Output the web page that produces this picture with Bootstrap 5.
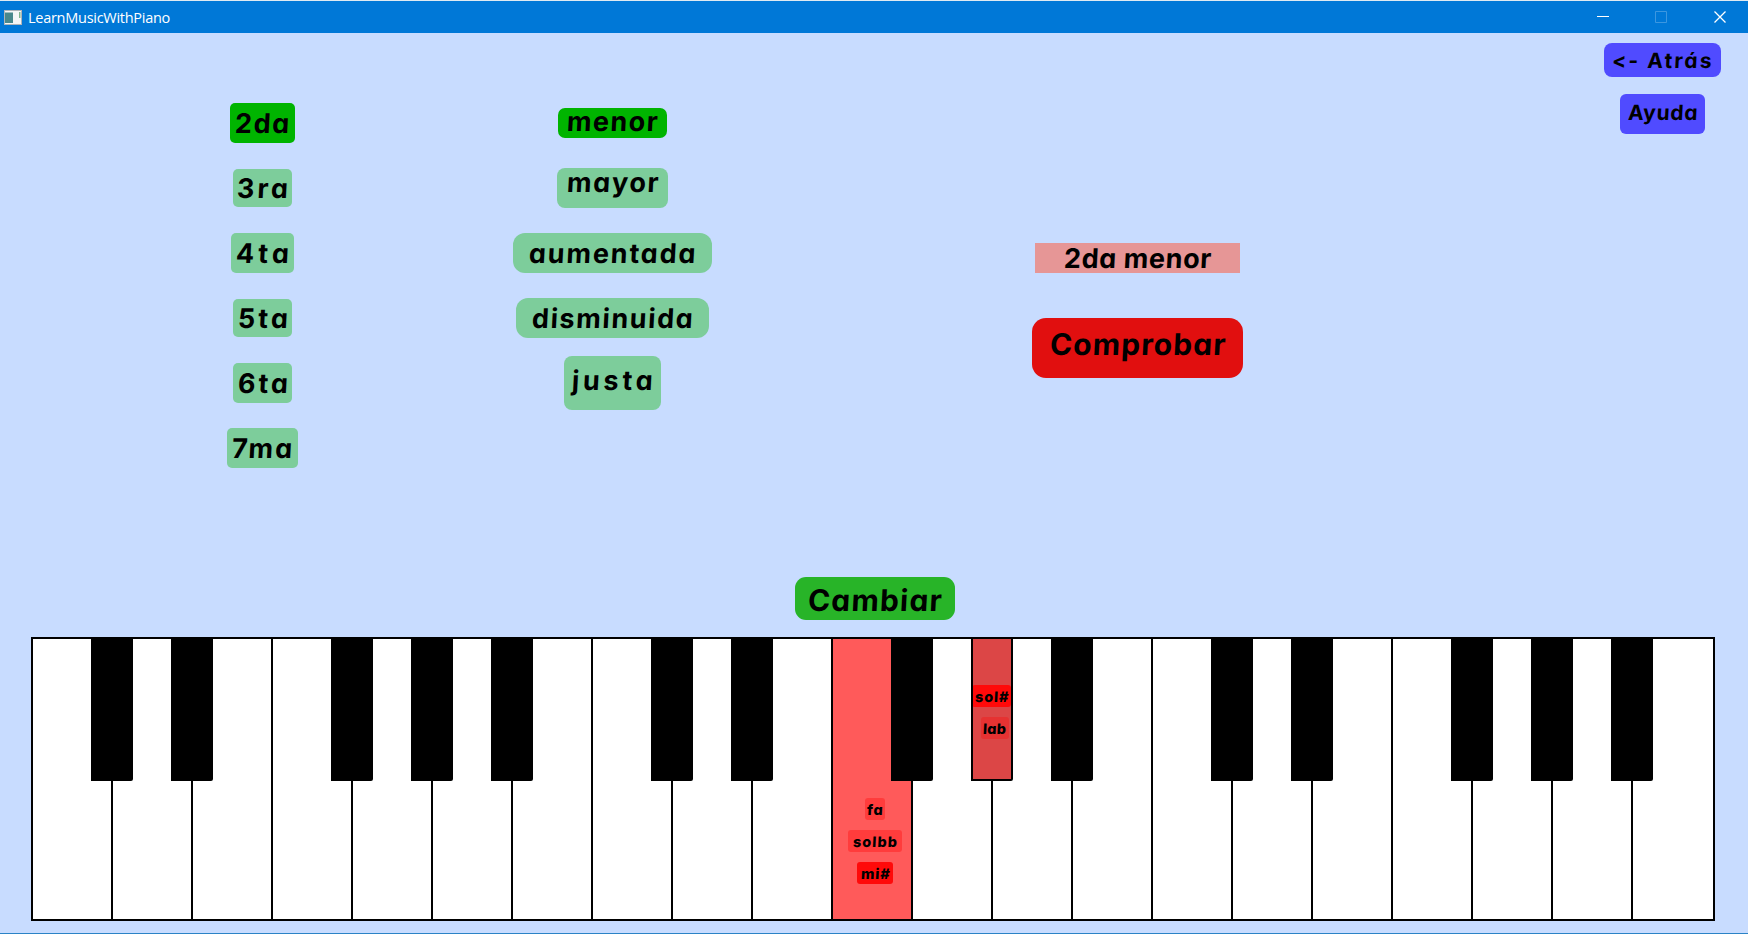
<!DOCTYPE html>
<html lang="es">
<head>
<meta charset="utf-8">
<title>LearnMusicWithPiano</title>
<link href="https://cdn.jsdelivr.net/npm/bootstrap@5.3.0/dist/css/bootstrap.min.css" rel="stylesheet">
<style>
  body { width: 1748px; height: 934px; overflow: hidden; background: #c8dcff; border-top: 1px solid #dfeaf2; border-bottom: 1px solid #2b83c6; }

  /* window title bar */
  .titlebar { height: 32px; background: #0078d7; color: #fff; font: 14.5px "Open Sans", sans-serif; }
  .titlebar .app-icon { margin: 0 6px 0 4px; }
  .titlebar .app-name { letter-spacing: -.27px; }

  /* coloured labels and buttons */
  .pill { display: flex; justify-content: center; align-items: flex-start; flex: none; border: 0; padding: var(--pt, 11px) 0 0; width: var(--w); height: var(--h, 40px); border-radius: var(--r, 5px); background: var(--bg, #7dcd9b); color: #000; }
  .pill span { display: block; white-space: pre; font: 700 var(--fs, 27px)/20px Inter, sans-serif; font-feature-settings: "cv11"; letter-spacing: var(--ls, 2px); margin-right: calc(-1 * var(--ls, 2px)); transform: skewX(-3deg); }
  .pill.on { --bg: #00b400; }

  /* choices */
  .work { height: 544px; }
  .choices { margin-top: 57.5px; }
  .choices > div { height: 65px; display: flex; align-items: center; justify-content: center; }
  .numbers { margin-left: 227px; width: 71px; }
  .kinds { margin-left: 215px; width: 199px; }
  .answer { margin: 210px 0 0 320px; width: 211px; gap: 45px; }
  .corner { margin: 10px 27px 0 auto; width: 117px; gap: 17px; }

  .n2 { --w: 65px; --ls: 1.6px; }
  .n3 { --w: 59px; --h: 38px; --pt: 10px; --ls: 3.1px; }
  .n4 { --w: 63px; --ls: 4px; }
  .n5 { --w: 59px; --h: 38px; --pt: 10px; --ls: 3px; }
  .n6 { --w: 59px; --ls: 2.9px; }
  .n7 { --w: 71px; --ls: 2.1px; }
  .k-menor { --w: 109px; --h: 30px; --pt: 4px; --r: 7px; --ls: 1.4px; }
  .k-mayor { --w: 111px; --pt: 5px; --r: 8px; --ls: 1.65px; }
  .k-aum { --w: 199px; --r: 12px; --ls: 1.8px; }
  .k-dis { --w: 193px; --r: 12px; --ls: 1.6px; }
  .k-justa { --w: 97px; --h: 54px; --pt: 15px; --r: 8px; --ls: 3.7px; }
  .result { --w: 205px; --h: 30px; --pt: 6px; --r: 0; --ls: .6px; --bg: #e69696; }
  .check { --w: 211px; --h: 60px; --pt: 16px; --r: 14px; --fs: 30px; --ls: 1.1px; --bg: #e10f0f; }
  .change { --w: 160px; --h: 43px; --pt: 13px; --r: 11px; --fs: 30px; --ls: 1.2px; --bg: #28b428; margin-left: 795px; }
  .back { --w: 117px; --h: 34px; --pt: 8px; --r: 8px; --fs: 21px; --ls: 2.1px; --bg: #504bff; }
  .back span { position: relative; left: -1px; }
  .help { --w: 85px; --h: 40px; --pt: 9px; --r: 6px; --fs: 21px; --ls: .8px; --bg: #504bff; }

  /* keyboard */
  .piano { margin: 17px 0 0 31px; width: 1684px; height: 284px; }
  .key-w { position: relative; width: 80px; height: 284px; background: #fff; border: 2px solid #000; border-right: 0; flex: none; }
  .key-w:last-child { width: 84px; border-right: 2px solid #000; }
  .key-b { position: absolute; z-index: 2; top: -2px; left: 58px; width: 42px; height: 144px; background: #000; border: 2px solid #000; border-bottom-right-radius: 2px; overflow: hidden; }
  .key-w.hit { background: #ff5a5a; }
  .key-b.hit { background: #dc4646; }
  .tags { gap: 10px; }
  .key-w > .tags { padding: 159px 0 0 6px; }
  .key-b > .tags { padding-top: 46px; }
  .tag { --h: 22px; --fs: 14.5px; --pt: 2px; --r: 3px; --bg: #ff3c3c; }
  .tag span { font-weight: 800; }
  .t-fa { --w: 20px; --ls: .9px; }
  .t-solbb { --w: 54px; --ls: 1px; }
  .t-mi { --w: 36px; --ls: .9px; --bg: #ff0a0a; }
  .t-sol { --w: 39px; --ls: .9px; --bg: #ff0a0a; margin-left: -1px; }
  .t-lab { --w: 28px; --ls: .2px; --bg: #e63232; margin-left: 8px; }
</style>
</head>
<body class="d-flex flex-column">
<header class="titlebar d-flex align-items-center flex-shrink-0">
  <svg class="app-icon" width="18" height="15" viewBox="0 0 18 15"><rect width="18" height="15" fill="#aeb4b8"/><rect x="1" y="1" width="16" height="13" fill="#f4f6f6"/><rect x="1" y="2.500" width="8" height="10.500" fill="#48888c"/><rect x="15" y="2" width="1.500" height="6" fill="#7fb48c"/></svg>
  <span class="app-name">LearnMusicWithPiano</span>
  <svg class="ms-auto" width="151" height="32" fill="none"><path d="M0 15.500h12" stroke="#fff"/><path d="M58.500 10.500h11v11h-11z" stroke="#3c97e0"/><path d="M117.500 10.500l11 11m0-11l-11 11" stroke="#fff" stroke-width="1.300"/></svg>
</header>

<main class="work d-flex align-items-start flex-shrink-0">
  <div class="choices numbers">
    <div><button class="pill on n2"><span>2da</span></button></div>
    <div><button class="pill n3"><span>3ra</span></button></div>
    <div><button class="pill n4"><span>4ta</span></button></div>
    <div><button class="pill n5"><span>5ta</span></button></div>
    <div><button class="pill n6"><span>6ta</span></button></div>
    <div><button class="pill n7"><span>7ma</span></button></div>
  </div>
  <div class="choices kinds">
    <div><button class="pill on k-menor"><span>menor</span></button></div>
    <div><button class="pill k-mayor"><span>mayor</span></button></div>
    <div><button class="pill k-aum"><span>aumentada</span></button></div>
    <div><button class="pill k-dis"><span>disminuida</span></button></div>
    <div><button class="pill k-justa"><span>justa</span></button></div>
  </div>
  <div class="answer d-flex flex-column align-items-center">
    <div class="pill result"><span>2da menor</span></div>
    <button class="pill check"><span>Comprobar</span></button>
  </div>
  <div class="corner d-flex flex-column align-items-center">
    <button class="pill back"><span>&lt;- Atrás</span></button>
    <button class="pill help"><span>Ayuda</span></button>
  </div>
</main>

<button class="pill change"><span>Cambiar</span></button>

<div class="piano d-flex flex-shrink-0">
  <div class="key-w"><div class="key-b"></div></div>
  <div class="key-w"><div class="key-b"></div></div>
  <div class="key-w"></div>
  <div class="key-w"><div class="key-b"></div></div>
  <div class="key-w"><div class="key-b"></div></div>
  <div class="key-w"><div class="key-b"></div></div>
  <div class="key-w"></div>
  <div class="key-w"><div class="key-b"></div></div>
  <div class="key-w"><div class="key-b"></div></div>
  <div class="key-w"></div>
  <div class="key-w hit">
    <div class="key-b"></div>
    <div class="tags d-flex flex-column align-items-center">
      <div class="pill tag t-fa"><span>fa</span></div>
      <div class="pill tag t-solbb"><span>solbb</span></div>
      <div class="pill tag t-mi"><span>mi#</span></div>
    </div>
  </div>
  <div class="key-w">
    <div class="key-b hit">
      <div class="tags d-flex flex-column align-items-start">
        <div class="pill tag t-sol"><span>sol#</span></div>
        <div class="pill tag t-lab"><span>lab</span></div>
      </div>
    </div>
  </div>
  <div class="key-w"><div class="key-b"></div></div>
  <div class="key-w"></div>
  <div class="key-w"><div class="key-b"></div></div>
  <div class="key-w"><div class="key-b"></div></div>
  <div class="key-w"></div>
  <div class="key-w"><div class="key-b"></div></div>
  <div class="key-w"><div class="key-b"></div></div>
  <div class="key-w"><div class="key-b"></div></div>
  <div class="key-w"></div>
</div>
<script src="https://cdn.jsdelivr.net/npm/bootstrap@5.3.0/dist/js/bootstrap.bundle.min.js"></script>
</body>
</html>
